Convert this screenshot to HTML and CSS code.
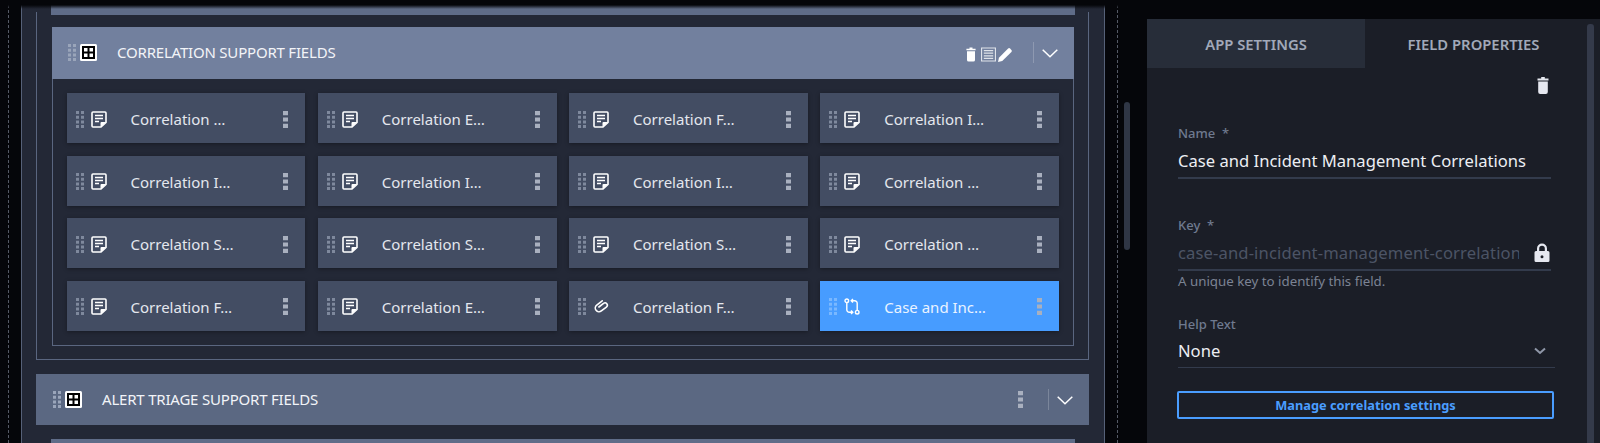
FILE: index.html

```html
<!DOCTYPE html>
<html lang="en">
<head>
  <meta charset="UTF-8">
  <title>field properties</title>
  <link rel="stylesheet" href="styles.css">
</head>
<body>

<svg class="defs" width="0" height="0">
  <symbol id="i-dots" viewBox="0 0 8 17">
    <path d="M0 0h3v3H0zM5 0h3v3H5zM0 4.700h3v3H0zM5 4.700h3v3H5zM0 9.400h3v3H0zM5 9.400h3v3H5zM0 14h3v3H0zM5 14h3v3H5z"/>
  </symbol>
  <symbol id="i-kebab" viewBox="0 0 5 17">
    <path d="M0 0h5v4.200H0zM0 6.400h5v4.200H0zM0 12.800h5v4.200H0z"/>
  </symbol>
  <symbol id="i-doc" viewBox="0 0 16 17">
    <path d="M2 1h12a1 1 0 0 1 1 1v9.500L10 16H2a1 1 0 0 1-1-1V2a1 1 0 0 1 1-1z" fill="none" stroke="#fff" stroke-width="1.600"/>
    <path d="M9.500 16v-4a1 1 0 0 1 1-1H15z" fill="#fff"/>
    <path d="M4 4.500h8M4 7.500h8M4 10.500h4" stroke="#fff" stroke-width="1.400"/>
  </symbol>
  <symbol id="i-clip" viewBox="0 0 18 17">
    <g transform="rotate(-38 9 8.500)">
      <path d="M14 4.300H6.200a4.200 4.200 0 0 0 0 8.400H13.400a2.600 2.600 0 0 0 0-5.200H6.800" fill="none" stroke="#fff" stroke-width="1.800" stroke-linecap="round"/>
    </g>
  </symbol>
  <symbol id="i-corr" viewBox="0 0 16 17">
    <circle cx="2.800" cy="2.800" r="1.800" fill="none" stroke="#fff" stroke-width="1.400"/>
    <circle cx="13.200" cy="14.200" r="1.800" fill="none" stroke="#fff" stroke-width="1.400"/>
    <path d="M2.800 4.800v7a2.500 2.500 0 0 0 2.500 2.500h2.500M13.200 12.200v-7a2.500 2.500 0 0 0-2.500-2.500H8.200M7 12.500l1.800 1.800L7 16M9 1l-1.800 1.700L9 4.500" fill="none" stroke="#fff" stroke-width="1.400"/>
  </symbol>
  <symbol id="i-trash" viewBox="0 0 12 17">
    <path d="M4.200 0h3.600v1.500H11.500v2H.5v-2h3.700zM1.200 4.500h9.600V15a2 2 0 0 1-2 2H3.200a2 2 0 0 1-2-2z"/>
  </symbol>
  <symbol id="i-grid" viewBox="0 0 17 17">
    <rect width="17" height="17" rx="1.500" fill="#fff"/>
    <rect x="2" y="2" width="13" height="13" fill="#000"/>
    <path d="M4 4h3.500v3.500H4zM9.500 4H13v3.500H9.500zM4 9.500h3.500V13H4zM9.500 9.500H13V13H9.500z" fill="#fff"/>
  </symbol>
</svg>

<div class="stage">
  <div class="board">
    <div class="top-edge"></div>

    <div class="outer">
      <section class="group">
        <header class="group-head light">
          <svg class="dots"><use href="#i-dots"/></svg>
          <svg class="grid"><use href="#i-grid"/></svg>
          <span class="group-title">CORRELATION SUPPORT FIELDS</span>
          <div class="head-tools">
            <svg class="tool-trash"><use href="#i-trash"/></svg>
            <svg class="tool-list" viewBox="0 0 16 15"><path d="M.6.6h14.800v13.800H.6z" fill="none" stroke="#dfe3ea" stroke-width="1.200"/><path d="M3 3.400h10M3 6.100h10M3 8.900h10M3 11.600h10" stroke="#dfe3ea" stroke-width="1.300"/></svg>
            <svg class="tool-pen" viewBox="0 0 16 16"><path d="M0 16l1-4.500L10.800 1.700a1.500 1.500 0 0 1 2.100 0l1.400 1.400a1.500 1.500 0 0 1 0 2.100L4.500 15z" fill="#fff"/></svg>
          </div>
          <div class="head-sep"></div>
          <svg class="chev" viewBox="0 0 16 9"><path d="M.7.7L8 7.800 15.300.7" fill="none" stroke="#fff" stroke-width="1.500"/></svg>
        </header>

        <div class="cards">
          <div class="card"><svg class="dots"><use href="#i-dots"/></svg><svg class="ico"><use href="#i-doc"/></svg><span class="card-name">Correlation …</span><svg class="kebab"><use href="#i-kebab"/></svg></div>
          <div class="card"><svg class="dots"><use href="#i-dots"/></svg><svg class="ico"><use href="#i-doc"/></svg><span class="card-name">Correlation E…</span><svg class="kebab"><use href="#i-kebab"/></svg></div>
          <div class="card"><svg class="dots"><use href="#i-dots"/></svg><svg class="ico"><use href="#i-doc"/></svg><span class="card-name">Correlation F…</span><svg class="kebab"><use href="#i-kebab"/></svg></div>
          <div class="card"><svg class="dots"><use href="#i-dots"/></svg><svg class="ico"><use href="#i-doc"/></svg><span class="card-name">Correlation I…</span><svg class="kebab"><use href="#i-kebab"/></svg></div>

          <div class="card"><svg class="dots"><use href="#i-dots"/></svg><svg class="ico"><use href="#i-doc"/></svg><span class="card-name">Correlation I…</span><svg class="kebab"><use href="#i-kebab"/></svg></div>
          <div class="card"><svg class="dots"><use href="#i-dots"/></svg><svg class="ico"><use href="#i-doc"/></svg><span class="card-name">Correlation I…</span><svg class="kebab"><use href="#i-kebab"/></svg></div>
          <div class="card"><svg class="dots"><use href="#i-dots"/></svg><svg class="ico"><use href="#i-doc"/></svg><span class="card-name">Correlation I…</span><svg class="kebab"><use href="#i-kebab"/></svg></div>
          <div class="card"><svg class="dots"><use href="#i-dots"/></svg><svg class="ico"><use href="#i-doc"/></svg><span class="card-name">Correlation …</span><svg class="kebab"><use href="#i-kebab"/></svg></div>

          <div class="card"><svg class="dots"><use href="#i-dots"/></svg><svg class="ico"><use href="#i-doc"/></svg><span class="card-name">Correlation S…</span><svg class="kebab"><use href="#i-kebab"/></svg></div>
          <div class="card"><svg class="dots"><use href="#i-dots"/></svg><svg class="ico"><use href="#i-doc"/></svg><span class="card-name">Correlation S…</span><svg class="kebab"><use href="#i-kebab"/></svg></div>
          <div class="card"><svg class="dots"><use href="#i-dots"/></svg><svg class="ico"><use href="#i-doc"/></svg><span class="card-name">Correlation S…</span><svg class="kebab"><use href="#i-kebab"/></svg></div>
          <div class="card"><svg class="dots"><use href="#i-dots"/></svg><svg class="ico"><use href="#i-doc"/></svg><span class="card-name">Correlation …</span><svg class="kebab"><use href="#i-kebab"/></svg></div>

          <div class="card"><svg class="dots"><use href="#i-dots"/></svg><svg class="ico"><use href="#i-doc"/></svg><span class="card-name">Correlation F…</span><svg class="kebab"><use href="#i-kebab"/></svg></div>
          <div class="card"><svg class="dots"><use href="#i-dots"/></svg><svg class="ico"><use href="#i-doc"/></svg><span class="card-name">Correlation E…</span><svg class="kebab"><use href="#i-kebab"/></svg></div>
          <div class="card"><svg class="dots"><use href="#i-dots"/></svg><svg class="ico"><use href="#i-clip"/></svg><span class="card-name">Correlation F…</span><svg class="kebab"><use href="#i-kebab"/></svg></div>
          <div class="card selected"><svg class="dots"><use href="#i-dots"/></svg><svg class="ico"><use href="#i-corr"/></svg><span class="card-name">Case and Inc…</span><svg class="kebab"><use href="#i-kebab"/></svg></div>
        </div>
      </section>
    </div>

    <header class="group-head dark">
      <svg class="dots"><use href="#i-dots"/></svg>
      <svg class="grid"><use href="#i-grid"/></svg>
      <span class="group-title">ALERT TRIAGE SUPPORT FIELDS</span>
      <svg class="kebab head-kebab"><use href="#i-kebab"/></svg>
      <div class="head-sep"></div>
      <svg class="chev" viewBox="0 0 16 9"><path d="M.7.7L8 7.800 15.300.7" fill="none" stroke="#fff" stroke-width="1.500"/></svg>
    </header>
    <div class="next-group"></div>
  </div>
</div>

<div class="rail">
  <div class="rail-thumb"></div>
</div>

<aside class="panel">
  <div class="panel-main">
    <div class="tabs">
      <div class="tab inactive">APP SETTINGS</div>
      <div class="tab">FIELD PROPERTIES</div>
    </div>
    <div class="panel-tools">
      <svg class="panel-trash"><use href="#i-trash"/></svg>
    </div>
    <div class="form">
      <label class="label">Name&nbsp; *</label>
      <div class="value name-value">Case and Incident Management Correlations</div>

      <label class="label key-label">Key&nbsp; *</label>
      <div class="value key-value">
        <span class="key-text">case-and-incident-management-correlation</span>
        <svg class="lock" viewBox="0 0 16 20"><path d="M3 8V5.500a5 5 0 0 1 10 0V8h-2.200V5.500a2.800 2.800 0 0 0-5.600 0V8z" fill="#e6e8f0"/><path fill-rule="evenodd" d="M2 8h12a1.500 1.500 0 0 1 1.500 1.500v8A1.500 1.500 0 0 1 14 19H2A1.500 1.500 0 0 1 .5 17.500v-8A1.500 1.500 0 0 1 2 8zm6 4.200a1.500 1.500 0 1 0 0 3 1.500 1.500 0 0 0 0-3z" fill="#e6e8f0"/></svg>
      </div>
      <div class="hint">A unique key to identify this field.</div>

      <label class="label help-label">Help Text</label>
      <div class="value select-value">
        <span>None</span>
        <svg class="select-chev" viewBox="0 0 12 8"><path d="M1 1.500l5 4.500 5-4.500" fill="none" stroke="#8f97a8" stroke-width="2"/></svg>
      </div>

      <button class="manage">Manage correlation settings</button>
    </div>
  </div>
  <div class="panel-scroll"></div>
</aside>

<div class="top-shade"></div>

</body>
</html>
```

FILE: styles.css

```css
html, body {
  margin: 0;
  height: 443px;
  overflow: hidden;
}

body {
  display: flex;
  position: relative;
  background: #05060a;
  color: #fff;
  font-family: "Noto Sans", sans-serif;
}

.defs {
  position: absolute;
}

/* left canvas */
.stage {
  width: 1084px;
  margin-left: 8px;
  padding-left: 12px;
  border-left: 1px dashed #555a66;
  flex: none;
}

.board {
  width: 1084px;
  height: 443px;
  box-sizing: border-box;
  padding: 0 15px 0 14px;
  background: #232836;
  border-left: 1px solid #566178;
  border-right: 1px solid #566178;
}

.top-edge {
  height: 15px;
  margin: 0 14px 0 15px;
  background: #5f6c88;
}

.outer {
  height: 348px;
  margin-top: -3px;
  padding: 15px 14px 0 15px;
  box-sizing: border-box;
  border: 1px solid #5a6680;
  border-top: 0;
}

.group {
  height: 319px;
  box-sizing: border-box;
  border: 1px solid #5a6680;
  border-top: 0;
}

.group-head {
  display: flex;
  align-items: center;
  height: 52px;
  box-sizing: border-box;
  padding: 0 16px 2px 16px;
  font-size: 15px;
}

.group-head.light {
  background: #72809e;
  margin: 0 -1px;
}

.group-head.dark {
  background: #5b6882;
  height: 51px;
  margin-top: 14px;
  padding-left: 17px;
  padding-bottom: 1px;
}

.dots {
  width: 8px;
  height: 17px;
  fill: #9aa5ba;
  flex: none;
}

.grid {
  width: 17px;
  height: 17px;
  margin-left: 4px;
  flex: none;
}

.group-title {
  margin-left: 20px;
  color: #f2f4f8;
  letter-spacing: -.2px;
  flex: 1;
}

.head-tools {
  display: flex;
  align-items: center;
  margin-top: 5px;
}

.tool-trash {
  width: 10px;
  height: 15px;
  margin-right: 5px;
  fill: #fff;
}

.tool-list {
  width: 15px;
  height: 15px;
  margin-right: 2px;
}

.tool-pen {
  width: 15px;
  height: 15px;
}

.head-sep {
  width: 1px;
  height: 21px;
  margin: 0 8px 0 20px;
  background: rgba(255, 255, 255, .2);
}

.chev {
  width: 16px;
  height: 9px;
  margin-top: 2px;
  flex: none;
}

.head-kebab {
  margin-right: 5px;
  fill: #b4bccb;
}

.cards {
  display: grid;
  grid-template-columns: repeat(4, 1fr);
  grid-auto-rows: 50px;
  gap: 12.6px 12.5px;
  padding: 14px 14px 0 13.5px;
}

.card {
  display: flex;
  align-items: center;
  padding: 2px 17px 0 9px;
  box-sizing: border-box;
  background: #434d63;
  box-shadow: 0 1px 4px rgba(0, 0, 0, .35);
  font-size: 15px;
}

.card .dots {
  fill: #7f899d;
}

.ico {
  width: 16px;
  height: 17px;
  margin-left: 7px;
  flex: none;
}

.card-name {
  margin-left: 24px;
  color: #e4e7ee;
  flex: 1;
  white-space: nowrap;
}

.kebab {
  width: 5px;
  height: 17px;
  fill: #a9b0bf;
  flex: none;
}

.card.selected {
  background: #479cff;
}

.card.selected .dots {
  fill: #7ab8ff;
}

.card.selected .card-name {
  color: #eaf3ff;
}

.next-group {
  height: 10px;
  margin: 14px 14px 0 15px;
  background: #5f6c88;
}

/* middle scrollbar */
.rail {
  width: 29px;
  margin-left: 12px;
  padding: 102px 0 0 6px;
  box-sizing: border-box;
  border-left: 1px dashed #555a66;
  flex: none;
}

.rail-thumb {
  width: 6px;
  height: 148px;
  border-radius: 3px;
  background: #2f3645;
}

/* right panel */
.panel {
  display: flex;
  flex: 1;
  margin-top: 19px;
  margin-left: 1px;
  background: #1b1e27;
}

.panel-main {
  flex: 1;
}

.panel-scroll {
  width: 7px;
  margin: 5px 6px 0 0;
  border-radius: 3px 3px 0 0;
  background: #343a4a;
}

.tabs {
  display: grid;
  grid-template-columns: 218px 217px;
  height: 49px;
}

.tab {
  display: flex;
  align-items: center;
  justify-content: center;
  font-size: 14.8px;
  font-weight: 600;
  color: #a1a9b9;
}

.tab.inactive {
  background: #272d39;
}

.panel-tools {
  display: flex;
  justify-content: flex-end;
  height: 28px;
  padding: 9px 38px 0 0;
}

.panel-trash {
  width: 12px;
  height: 17px;
  fill: #e6e8f0;
}

.form {
  display: flex;
  flex-direction: column;
  align-items: flex-start;
  padding: 19px 0 0 31px;
}

.label {
  font-size: 13px;
  font-weight: 500;
  line-height: 18px;
  color: #6f7a8f;
}

.value {
  display: flex;
  align-items: center;
  height: 33px;
  font-size: 16.6px;
  color: #eceef3;
  width: 373px;
  border-bottom: 2px solid #333b4c;
}

.name-value {
  margin-top: 1px;
  height: 34px;
}

.key-label {
  margin-top: 37px;
}

.key-value {
  margin-top: 2px;
  color: #4c5465;
  justify-content: space-between;
}

.key-text {
  width: 341px;
  overflow: hidden;
  white-space: nowrap;
  letter-spacing: .12px;
}

.lock {
  width: 16px;
  height: 20px;
  margin-right: 1px;
}

.hint {
  margin-top: 1px;
  font-size: 13.3px;
  line-height: 19px;
  color: #7b8394;
}

.help-label {
  margin-top: 24px;
}

.select-value {
  width: 377px;
  margin-top: 1px;
  justify-content: space-between;
  border-bottom-width: 1px;
}

.select-chev {
  width: 12px;
  height: 8px;
  margin-right: 9px;
}

.manage {
  width: 377px;
  height: 28px;
  margin: 23px 0 0 -1px;
  border: 2px solid #4a9dff;
  border-radius: 2px;
  background: transparent;
  color: #4a9dff;
  font-family: "Noto Sans", sans-serif;
  font-size: 12.8px;
  font-weight: 700;
  padding: 0;
}

/* dark fade on top of the viewport */
.top-shade {
  position: absolute;
  top: 0;
  left: 0;
  right: 0;
  height: 9px;
  background: linear-gradient(#05060a 55%, rgba(5, 6, 10, 0));
}
```
